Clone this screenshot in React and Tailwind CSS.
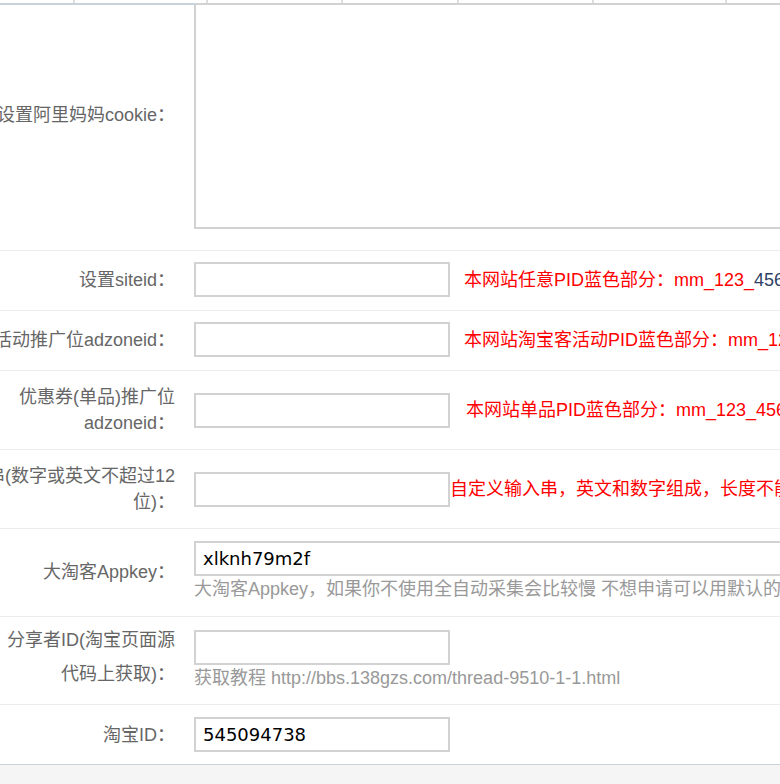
import React from "react";

const FONT = { fontFamily: '"Liberation Sans", "Noto Sans CJK SC", sans-serif' };

function Field({ value = "", wide = false }) {
  return (
    <input
      readOnly
      defaultValue={value}
      className={
        (wide ? "w-[700px]" : "w-[256px]") +
        " h-[35px] shrink-0 border-2 border-[#d2d2d2] bg-white px-[7px] text-[18px] text-black outline-none"
      }
      style={{ fontFamily: '"DejaVu Sans", "Noto Sans CJK SC", sans-serif' }}
    />
  );
}

function Label({ children, className = "" }) {
  return (
    <div className={"flex w-[194px] shrink-0 justify-end pr-[19px] " + className}>
      <div className="whitespace-nowrap text-right text-[#666]">{children}</div>
    </div>
  );
}

export default function App() {
  return (
    <div
      className="h-[784px] w-[780px] overflow-hidden bg-white text-[18px] leading-[26px]"
      style={FONT}
    >
      {/* header column ticks */}
      <div className="flex h-[3px]">
        <div className="w-[75px] border-r-2 border-[#dedede]" />
        <div className="w-[133px] border-r-2 border-[#dedede]" />
        <div className="w-[135px] border-r-2 border-[#dedede]" />
        <div className="w-[116px] border-r-2 border-[#dedede]" />
        <div className="w-[135px] border-r-2 border-[#dedede]" />
        <div className="w-[133px] border-r-2 border-[#dedede]" />
        <div className="flex-1" />
      </div>
      <div className="h-[1px] bg-[#c6d3dc]" />

      {/* row 1: cookie */}
      <div className="flex items-center border-b border-[#ececec] pb-[21px]">
        <Label className="self-stretch items-center border-t border-[#c6d3dc] pb-[5px]">设置阿里妈妈cookie：</Label>
        <textarea
          readOnly
          className="-mt-px h-[226px] w-[640px] shrink-0 resize-none border-2 border-[#d2d2d2] bg-white outline-none"
        />
      </div>

      {/* row 2: siteid */}
      <div className="flex items-center border-b border-[#ececec] pt-[11px] pb-[13px]">
        <Label className="items-center">设置siteid：</Label>
        <div className="flex shrink-0 items-center whitespace-nowrap">
          <Field />
          <span className="ml-[14px] text-[#ff0000]">
            本网站任意PID蓝色部分：mm_123_<span className="text-[#2f3f66]">456</span>_789
          </span>
        </div>
      </div>

      {/* row 3: adzoneid */}
      <div className="flex items-center border-b border-[#ececec] pt-[11px] pb-[13px]">
        <Label className="items-center">设置淘宝客活动推广位adzoneid：</Label>
        <div className="flex shrink-0 items-center whitespace-nowrap">
          <Field />
          <span className="ml-[14px] text-[#ff0000]">
            本网站淘宝客活动PID蓝色部分：mm_123_456_<span className="text-[#2f3f66]">789</span>
          </span>
        </div>
      </div>

      {/* row 4: coupon adzoneid */}
      <div className="flex items-center border-b border-[#ececec] py-[13px]">
        <Label className="items-center">
          优惠券(单品)推广位
          <br />
          adzoneid：
        </Label>
        <div className="flex shrink-0 items-center whitespace-nowrap">
          <Field />
          <span className="ml-[16px] text-[#ff0000]">
            本网站单品PID蓝色部分：mm_123_456_<span className="text-[#2f3f66]">789</span>
          </span>
        </div>
      </div>

      {/* row 5: custom string */}
      <div className="flex items-center border-b border-[#ececec] py-[13px]">
        <Label className="items-center">
          设置自定义串(数字或英文不超过12
          <br />
          位)：
        </Label>
        <div className="flex shrink-0 items-center whitespace-nowrap">
          <Field />
          <span className="text-[#ff0000]">自定义输入串，英文和数字组成，长度不能超过12位</span>
        </div>
      </div>

      {/* row 6: appkey */}
      <div className="flex items-center border-b border-[#ececec] pt-[12px] pb-[14px]">
        <Label className="items-center">大淘客Appkey：</Label>
        <div className="flex shrink-0 flex-col whitespace-nowrap">
          <Field value="xlknh79m2f" wide />
          <div className="text-[#999]">
            大淘客Appkey，如果你不使用全自动采集会比较慢 不想申请可以用默认的即可
          </div>
        </div>
      </div>

      {/* row 7: sharer id */}
      <div className="flex items-start border-b border-[#ececec] pt-[6px] pb-[13px]">
        <Label className="leading-[34px]">
          分享者ID(淘宝页面源
          <br />
          代码上获取)：
        </Label>
        <div className="flex shrink-0 flex-col whitespace-nowrap pt-[7px]">
          <Field />
          <div className="text-[#999]">获取教程 http://bbs.138gzs.com/thread-9510-1-1.html</div>
        </div>
      </div>

      {/* row 8: taobao id */}
      <div className="flex items-center border-b border-[#c6d3dc] py-[12px]">
        <Label className="items-center">淘宝ID：</Label>
        <Field value="545094738" />
      </div>

      <div className="h-[40px] bg-[#f5f5f5]" />
    </div>
  );
}
